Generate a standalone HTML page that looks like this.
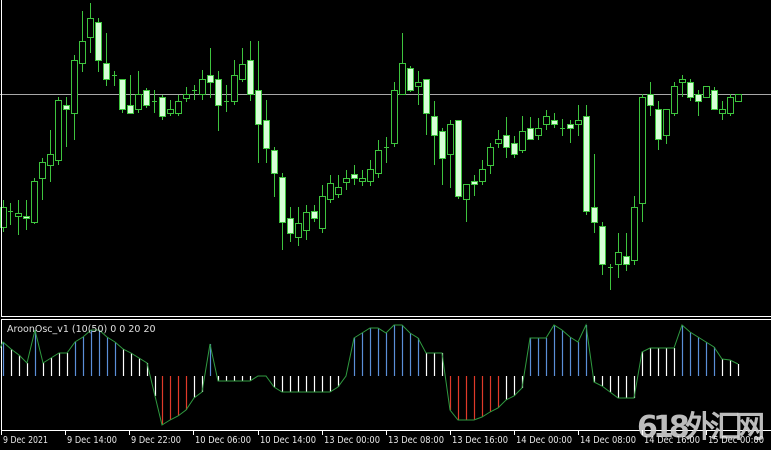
<!DOCTYPE html>
<html><head><meta charset="utf-8"><style>
html,body{margin:0;padding:0;background:#000;}
svg{display:block}
text{font-family:"DejaVu Sans","Liberation Sans",sans-serif;}
</style></head><body>
<svg id="s" width="771" height="450" xmlns="http://www.w3.org/2000/svg">
<rect width="771" height="450" fill="#000"/>
<line x1="0" y1="94.5" x2="771" y2="94.5" stroke="#a8a8a8" stroke-width="1"/>
<g id="c"></g>
<line x1="1.5" y1="0" x2="1.5" y2="316.5" stroke="#fff"/>
<line x1="1" y1="316.5" x2="771" y2="316.5" stroke="#fff"/>
<line x1="1" y1="319.5" x2="771" y2="319.5" stroke="#fff"/>
<line x1="1.5" y1="319" x2="1.5" y2="430.5" stroke="#fff"/>
<line x1="1" y1="430.5" x2="771" y2="430.5" stroke="#fff"/>
<g id="h"></g>
<text x="7" y="332" font-size="9.5" fill="#e0e0e0">AroonOsc_v1 (10(50) 0 0 20 20</text>
<text x="637" y="437" font-size="30" font-weight="bold" fill="#d0d0d0" fill-opacity="0.9" font-family="Liberation Sans,'Noto Sans CJK SC',sans-serif" textLength="128">618外汇网</text>
<g id="t" font-size="9.5" fill="#e8e8e8" style="font-family:'Liberation Sans',sans-serif"></g>
</svg>
<script>
var NS="http://www.w3.org/2000/svg";
function el(p,n,a){var e=document.createElementNS(NS,n);for(var k in a)e.setAttribute(k,a[k]);p.appendChild(e);return e;}
var C=[
[3,200,207,227,232,0],[10,203,211,212,225,0],[18,200,213,216,235,0],[26,200,216,218,230,1],[34,178,181,222,224,0],
[42,158,162,178,200,0],[50,130,154,165,182,0],[58,97,100,160,165,0],[66,97,105,109,147,1],[74,55,60,113,140,0],
[82,11,41,63,72,0],[90,3,18,37,53,0],[98,18,22,60,72,1],[106,33,63,79,86,1],[114,71,75,76,86,0],
[122,79,79,109,113,1],[130,75,105,113,113,1],[138,71,94,109,113,0],[146,88,90,105,108,1],[154,90,101,102,113,0],
[162,95,97,116,120,1],[170,100,109,113,116,0],[178,95,101,113,116,0],[186,87,94,98,102,0],[194,85,90,91,100,0],
[202,70,79,94,100,0],[210,48,75,82,98,1],[218,71,79,105,131,1],[226,85,101,102,112,0],[234,60,75,101,105,0],
[242,48,64,79,82,0],[250,41,60,94,101,1],[258,41,90,124,163,1],[266,100,120,148,163,1],[274,147,150,173,197,1],
[282,173,177,222,250,1],[290,207,218,233,242,1],[298,207,223,237,246,0],[306,205,212,230,240,0],[314,205,211,218,222,1],
[322,185,196,228,233,0],[330,175,183,199,203,0],[338,175,187,194,198,0],[346,170,178,182,190,0],[354,165,174,178,185,1],
[362,170,178,181,186,0],[370,160,169,181,186,0],[378,140,150,173,178,0],[386,137,147,148,163,0],[394,82,90,143,147,0],
[402,33,63,94,94,0],[410,66,68,90,92,1],[418,71,82,86,105,0],[426,79,79,113,135,1],[434,101,116,135,165,1],
[442,128,131,158,185,1],[450,120,124,154,188,0],[458,120,120,196,199,1],[466,184,184,199,222,0],[474,175,181,184,196,1],
[482,160,169,181,185,0],[490,143,147,165,174,0],[498,130,139,143,148,0],[506,117,135,147,158,1],[514,136,143,154,158,1],
[522,116,131,150,153,0],[530,117,128,139,140,1],[538,118,128,135,140,0],[546,110,116,124,130,0],[554,113,120,124,128,1],
[562,119,128,129,136,0],[570,120,124,128,143,1],[578,105,120,124,136,0],[586,105,116,211,215,1],[594,154,207,222,233,1],
[602,222,226,264,275,1],[610,264,267,268,290,0],[618,233,252,264,278,0],[626,233,256,264,271,1],[634,196,207,260,265,0],
[642,94,97,203,222,0],[650,82,94,105,116,1],[658,101,109,139,150,1],[666,109,109,135,144,0],[674,82,86,113,116,0],
[682,75,79,82,97,0],[690,79,82,97,101,1],[698,90,94,101,116,1],[706,86,86,97,97,0],[714,87,90,109,110,1],
[722,101,109,113,120,0],[730,94,97,113,116,0],[738,94,94,101,101,0]
];
var g=document.getElementById('c');
C.forEach(function(c){
 var x=c[0];
 el(g,'line',{x1:x+0.5,y1:c[1],x2:x+0.5,y2:c[4],stroke:'#3ec43e','stroke-width':1});
 if(c[3]-c[2]<=1){el(g,'line',{x1:x-2,y1:c[2]+0.5,x2:x+3,y2:c[2]+0.5,stroke:'#3ec43e'});}
 else el(g,'rect',{x:x-2.5,y:c[2]+0.5,width:6,height:c[3]-c[2],fill:c[5]?'#d8ffd8':'#000',stroke:'#3ec43e','stroke-width':1});
});
var H=[[3,342],[11,349],[19,355],[27,363],[35,330],[43,363],[51,358],[59,353],[67,353],[75,342],[83,337],[91,330],[99,330],[107,337],[115,342],[123,349],[131,353],[139,358],[147,363],[155,396],[162,425],[170,420],[178,416],[186,410],[194,398],[202,392],[210,344],[218,381],[226,381],[234,381],[242,381],[250,381],[258,376],[266,376],[274,387],[282,392],[290,392],[298,392],[306,392],[314,392],[322,392],[330,392],[338,387],[346,376],[354,338],[362,333],[370,328],[378,328],[386,333],[394,325],[402,325],[410,333],[418,338],[426,353],[434,353],[442,353],[450,410],[458,420],[466,420],[474,420],[482,417],[490,412],[498,408],[506,400],[514,396],[522,388],[530,338],[538,338],[546,338],[554,325],[562,330],[570,337],[578,342],[586,325],[594,382],[602,386],[610,392],[618,398],[626,398],[634,398],[642,352],[650,348],[658,348],[666,348],[674,348],[682,325],[690,332],[698,337],[706,342],[714,347],[722,359],[730,360],[738,364]];
var h=document.getElementById('h');var pts=[];
H.forEach(function(p){
 var col=p[1]<=347.5?'#5b8fd8':(p[1]>=404?'#e03a2a':'#ffffff');
 el(h,'line',{x1:p[0]+0.5,y1:376,x2:p[0]+0.5,y2:p[1],stroke:col,'stroke-width':1.2});
 pts.push(p[0]+','+p[1]);
});
el(h,'polyline',{points:'0,348 '+pts.join(' '),fill:'none',stroke:'#2f9a40','stroke-width':1});
var T=[[1,'9 Dec 2021',45],[65,'9 Dec 14:00',50],[129,'9 Dec 22:00',50],[193,'10 Dec 06:00',56],[258,'10 Dec 14:00',56],[322,'13 Dec 00:00',56],[386,'13 Dec 08:00',56],[450,'13 Dec 16:00',56],[514,'14 Dec 00:00',56],[578,'14 Dec 08:00',56],[642,'14 Dec 16:00',56],[706,'15 Dec 00:00',56]];
var t=document.getElementById('t');var s=document.getElementById('s');
T.forEach(function(a){
 el(s,'line',{x1:a[0]+0.5,y1:430,x2:a[0]+0.5,y2:435,stroke:'#fff'});
 var e=el(t,'text',{x:a[0]+2,y:443,textLength:a[2],lengthAdjust:'spacingAndGlyphs'});e.textContent=a[1];
});
</script>
</body></html>
